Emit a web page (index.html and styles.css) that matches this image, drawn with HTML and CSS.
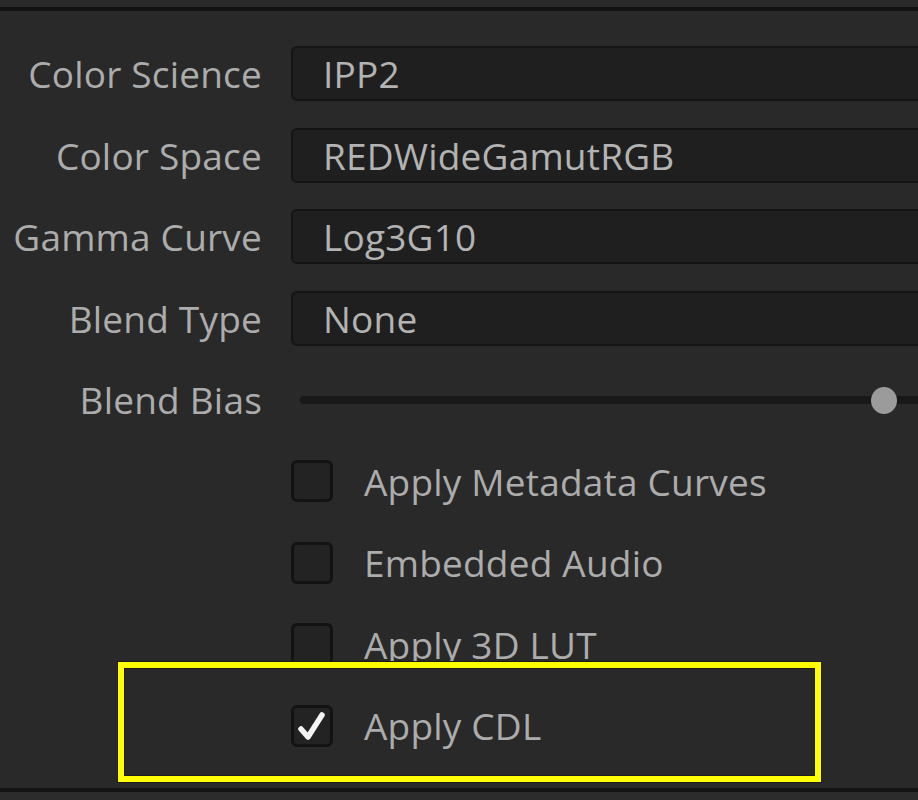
FILE: index.html
```html
<!DOCTYPE html>
<html lang="en">
<head>
    <meta charset="UTF-8">
    <meta name="viewport" content="width=device-width, initial-scale=1.0">
    <title>Clip Attributes - Camera Raw</title>
    <link rel="stylesheet" href="styles.css">
</head>
<body>
    <div class="rule"></div>

    <div class="panel">
        <div class="row">
            <span class="label">Color Science</span>
            <div class="field">IPP2</div>
        </div>
        <div class="row">
            <span class="label">Color Space</span>
            <div class="field">REDWideGamutRGB</div>
        </div>
        <div class="row">
            <span class="label">Gamma Curve</span>
            <div class="field">Log3G10</div>
        </div>
        <div class="row">
            <span class="label">Blend Type</span>
            <div class="field">None</div>
        </div>
        <div class="row">
            <span class="label">Blend Bias</span>
            <div class="slider">
                <div class="track"></div>
                <div class="knob"></div>
            </div>
        </div>

        <div class="row">
            <span></span>
            <label class="check"><span class="box"></span>Apply Metadata Curves</label>
        </div>
        <div class="row">
            <span></span>
            <label class="check"><span class="box"></span>Embedded Audio</label>
        </div>
        <div class="row">
            <span></span>
            <label class="check"><span class="box"></span>Apply 3D LUT</label>
        </div>
        <div class="row">
            <span></span>
            <label class="check">
                <span class="box checked">
                    <svg viewBox="0 0 42 42" width="42" height="42">
                        <path d="M10 24 L17 32 L31 10" fill="none" stroke="#f4f4f4" stroke-width="5.5" stroke-linecap="round" stroke-linejoin="round"/>
                    </svg>
                </span>Apply CDL
            </label>
        </div>

        <div class="highlight"></div>
    </div>

    <div class="rule bottom"></div>
</body>
</html>
```

FILE: styles.css
```css
body {
    margin: 0;
    background: #2a2a2a;
    font-family: 'Open Sans', 'Noto Sans', sans-serif;
    font-size: 37px;
    letter-spacing: 0.2px;
    color: #acacac;
    overflow: hidden;
    height: 800px;
}

.rule {
    margin-top: 7px;
    height: 4px;
    background: #121212;
}
.rule.bottom {
    margin-top: 0;
    border-bottom: 9px solid #2c2c2c;
    background: #141414;
}

.panel {
    position: relative;
    background: #292929;
    padding-top: 22px;
    height: 777px;
    box-sizing: border-box;
    overflow: hidden;
}

.row {
    display: grid;
    grid-template-columns: 262px 1fr;
    column-gap: 29px;
    align-items: center;
    height: 81.5px;
}

.label {
    text-align: right;
    white-space: nowrap;
}

.field {
    height: 55px;
    box-sizing: border-box;
    margin-right: -40px;
    background: #1f1f1f;
    border: 2px solid #141414;
    border-radius: 6px;
    padding-left: 30px;
    display: flex;
    align-items: center;
    color: #b3b3b3;
}

.slider {
    position: relative;
    height: 30px;
    margin-right: -40px;
}
.track {
    position: absolute;
    left: 9px;
    right: 0;
    top: 11px;
    height: 8px;
    border-radius: 4px;
    background: #181818;
}
.knob {
    position: absolute;
    left: 580px;
    top: 2px;
    width: 26px;
    height: 27px;
    border-radius: 50%;
    background: #9b9b9b;
}

.check {
    display: flex;
    align-items: center;
    gap: 31px;
    white-space: nowrap;
}
.box {
    width: 42px;
    height: 42px;
    box-sizing: border-box;
    border: 3px solid #131313;
    border-radius: 6px;
    background: #232323;
    display: flex;
    align-items: center;
    justify-content: center;
    flex-shrink: 0;
}
.box svg {
    flex-shrink: 0;
}

/* callout frame around the last option */
.highlight {
    position: absolute;
    left: 118px;
    top: 651px;
    width: 703px;
    height: 120px;
    box-sizing: border-box;
    border: 6px solid #ffff00;
    box-shadow: inset 0 0 0 1px #1c1c1c, 0 0 0 1px #1c1c1c;
}
```
